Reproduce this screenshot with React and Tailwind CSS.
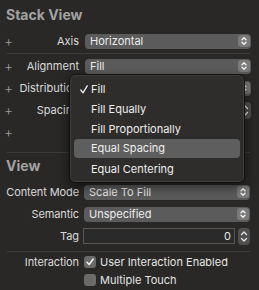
import React from "react";

const Stepper = () => (
  <div className="w-[12px] h-[12px] rounded-[3px] bg-[#7a7a7a] flex items-center justify-center shrink-0">
    <svg width="8" height="10" viewBox="0 0 8 10" fill="none" stroke="#f2f2f2" strokeWidth="1.4" strokeLinecap="round" strokeLinejoin="round">
      <path d="M2 3.8 L4 1.8 L6 3.8" />
      <path d="M2 6.2 L4 8.2 L6 6.2" />
    </svg>
  </div>
);

const Popup = ({ text }) => (
  <div className="w-[166px] h-[15px] rounded-[4px] bg-[#5b5b5b] flex items-center justify-between pl-[5px] pr-[1px]">
    <span className="text-[11px] leading-none text-[#ececec]">{text}</span>
    <Stepper />
  </div>
);

const Row = ({ label, children, h = "h-[22px]" }) => (
  <div className={`${h} flex items-center`}>
    <div className="w-[16px] flex justify-center pl-[1px] text-[#9a9a9a] text-[14px] leading-none font-light">+</div>
    <div className="w-[63px] text-right text-[11px] text-[#dadada] whitespace-nowrap">{label}</div>
    <div className="ml-[6px]">{children}</div>
  </div>
);

const PlainRow = ({ label, children, h = "h-[22px]" }) => (
  <div className={`${h} flex items-center`}>
    <div className="w-[79px] text-right text-[11px] text-[#dadada] whitespace-nowrap tracking-[-0.1px]">{label}</div>
    <div className="ml-[5px]">{children}</div>
  </div>
);

const Sep = ({ cls }) => <div className={`h-px bg-[#3d3c3b] ml-[7px] mr-[9px] ${cls}`} />;

const NumStepper = () => (
  <div className="w-[12px] h-[17px] rounded-[4px] bg-[#4f4f4f] flex flex-col items-center justify-center gap-[1px]">
    <svg width="8" height="6" viewBox="0 0 8 6" fill="none" stroke="#e8e8e8" strokeWidth="1.3" strokeLinecap="round" strokeLinejoin="round">
      <path d="M1.5 4.5 L4 2 L6.5 4.5" />
    </svg>
    <svg width="8" height="6" viewBox="0 0 8 6" fill="none" stroke="#e8e8e8" strokeWidth="1.3" strokeLinecap="round" strokeLinejoin="round">
      <path d="M1.5 1.5 L4 4 L6.5 1.5" />
    </svg>
  </div>
);

const Check = ({ checked, label }) => (
  <div className="flex items-center gap-[4px]">
    <div className="w-[12px] h-[12px] rounded-[3px] bg-[#6a6a6a] flex items-center justify-center">
      {checked && (
        <svg width="10" height="10" viewBox="0 0 10 10" fill="none" stroke="#f0f0f0" strokeWidth="1.5" strokeLinecap="round" strokeLinejoin="round">
          <path d="M2 5.3 L4.2 7.5 L8.2 2" />
        </svg>
      )}
    </div>
    <span className="text-[11px] text-[#e4e4e4] whitespace-nowrap">{label}</span>
  </div>
);

export default function App() {
  const items = ["Fill", "Fill Equally", "Fill Proportionally", "Equal Spacing", "Equal Centering"];
  return (
    <div className="w-[259px] h-[290px] bg-[#292827] relative overflow-hidden font-['Inter',sans-serif]">
      <div className="h-[28px] flex items-center pl-[6px] text-[14px] font-bold text-[#a2a2a2]">Stack View</div>
      <div className="mt-[2px]">
        <Row label="Axis"><Popup text="Horizontal" /></Row>
      </div>
      <Sep cls="mt-px" />
      <div className="mt-[1px]">
        <Row label="Alignment"><Popup text="Fill" /></Row>
        <Row label="Distribution"><Popup text="Fill" /></Row>
        <Row label="Spacing">
          <div className="flex items-center gap-[3px]">
            <div className="w-[151px] h-[15px] border border-[#555] bg-[#2a2a2a]" />
            <NumStepper />
          </div>
        </Row>
        <Row label=""><div /></Row>
      </div>
      <Sep cls="mt-[9px]" />
      <div className="h-[24px] flex items-center pl-[6px] text-[14px] font-bold text-[#a2a2a2]">View</div>
      <div className="mt-[4px]">
        <PlainRow label="Content Mode"><Popup text="Scale To Fill" /></PlainRow>
        <PlainRow label="Semantic"><Popup text="Unspecified" /></PlainRow>
        <PlainRow label="Tag">
          <div className="flex items-center gap-[3px] -ml-[1px]">
            <div className="w-[152px] h-[16px] border border-[#565656] bg-[#2a2a2a] flex items-center justify-end pr-[3px]">
              <span className="text-[11px] text-[#e4e4e4] leading-none">0</span>
            </div>
            <NumStepper />
          </div>
        </PlainRow>
      </div>
      <Sep cls="mt-[4px]" />
      <div className="mt-[1px]">
        <PlainRow label="Interaction" h="h-[18px]"><Check checked label="User Interaction Enabled" /></PlainRow>
        <PlainRow label="" h="h-[18px]"><Check label="Multiple Touch" /></PlainRow>
      </div>

      <div className="absolute left-[69px] top-[74px] w-[176px] h-[109px] rounded-[6px] border border-[#121212] bg-[#2e2d2c] shadow-[0_4px_12px_rgba(0,0,0,0.55),inset_0_0_0_1px_rgba(255,255,255,0.08)] pt-[4px] px-[4px]">
        {items.map((it, i) => (
          <div
            key={it}
            className={`flex items-center rounded-[4px] ${i === 3 ? "bg-[#5e5e5e] h-[19px] mb-[1px]" : "h-[20px]"}`}
          >
            <span className="w-[17px] pl-[6px] flex items-center">
              {i === 0 && (
                <svg width="8" height="9" viewBox="0 0 8 9" fill="none" stroke="#eeeeee" strokeWidth="1.3" strokeLinecap="round" strokeLinejoin="round">
                  <path d="M0.8 5 L3 7.8 L7.2 0.8" />
                </svg>
              )}
            </span>
            <span className="text-[11px] text-[#eeeeee] whitespace-nowrap">{it}</span>
          </div>
        ))}
      </div>
    </div>
  );
}
